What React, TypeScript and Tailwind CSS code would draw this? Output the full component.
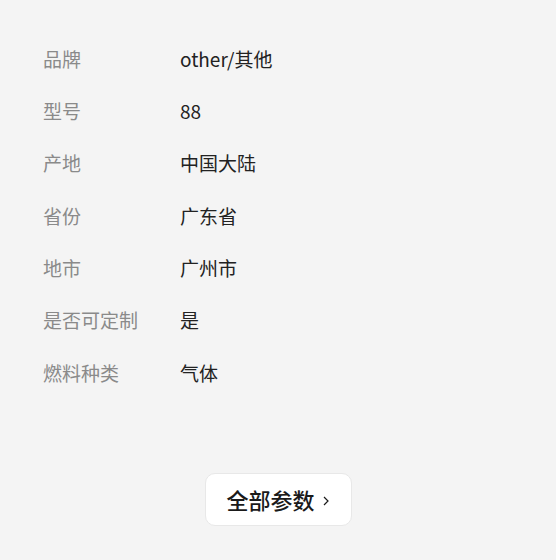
const rows: [string, string][] = [
  ["品牌", "other/其他"],
  ["型号", "88"],
  ["产地", "中国大陆"],
  ["省份", "广东省"],
  ["地市", "广州市"],
  ["是否可定制", "是"],
  ["燃料种类", "气体"],
];

export default function App() {
  return (
    <div
      className="w-[556px] h-[560px] bg-[#f4f4f4] flex flex-col"
      style={{ fontFamily: '"Noto Sans CJK SC", "Noto Sans", sans-serif' }}
    >
      <div className="pt-[33px] pl-[43px] flex flex-col">
        {rows.map(([k, v]) => (
          <div key={k} className="h-[52.3px] flex items-center text-[19px]">
            <span className="w-[137px] text-[#8a8a8a]">{k}</span>
            <span className="text-[#222]">{v}</span>
          </div>
        ))}
      </div>
      <div className="flex justify-center mt-[74px]">
        <button className="w-[147px] h-[53px] bg-white border border-[#e8e8e8] rounded-[10px] flex items-center justify-center gap-[7px] text-[#1a1a1a]">
          <span className="text-[22px] font-medium">全部参数</span>
          <svg width="8" height="12" viewBox="0 0 8 12" className="mt-[2px]">
            <path d="M2 2l4 4-4 4" fill="none" stroke="#1a1a1a" strokeWidth="1.2" />
          </svg>
        </button>
      </div>
    </div>
  );
}
